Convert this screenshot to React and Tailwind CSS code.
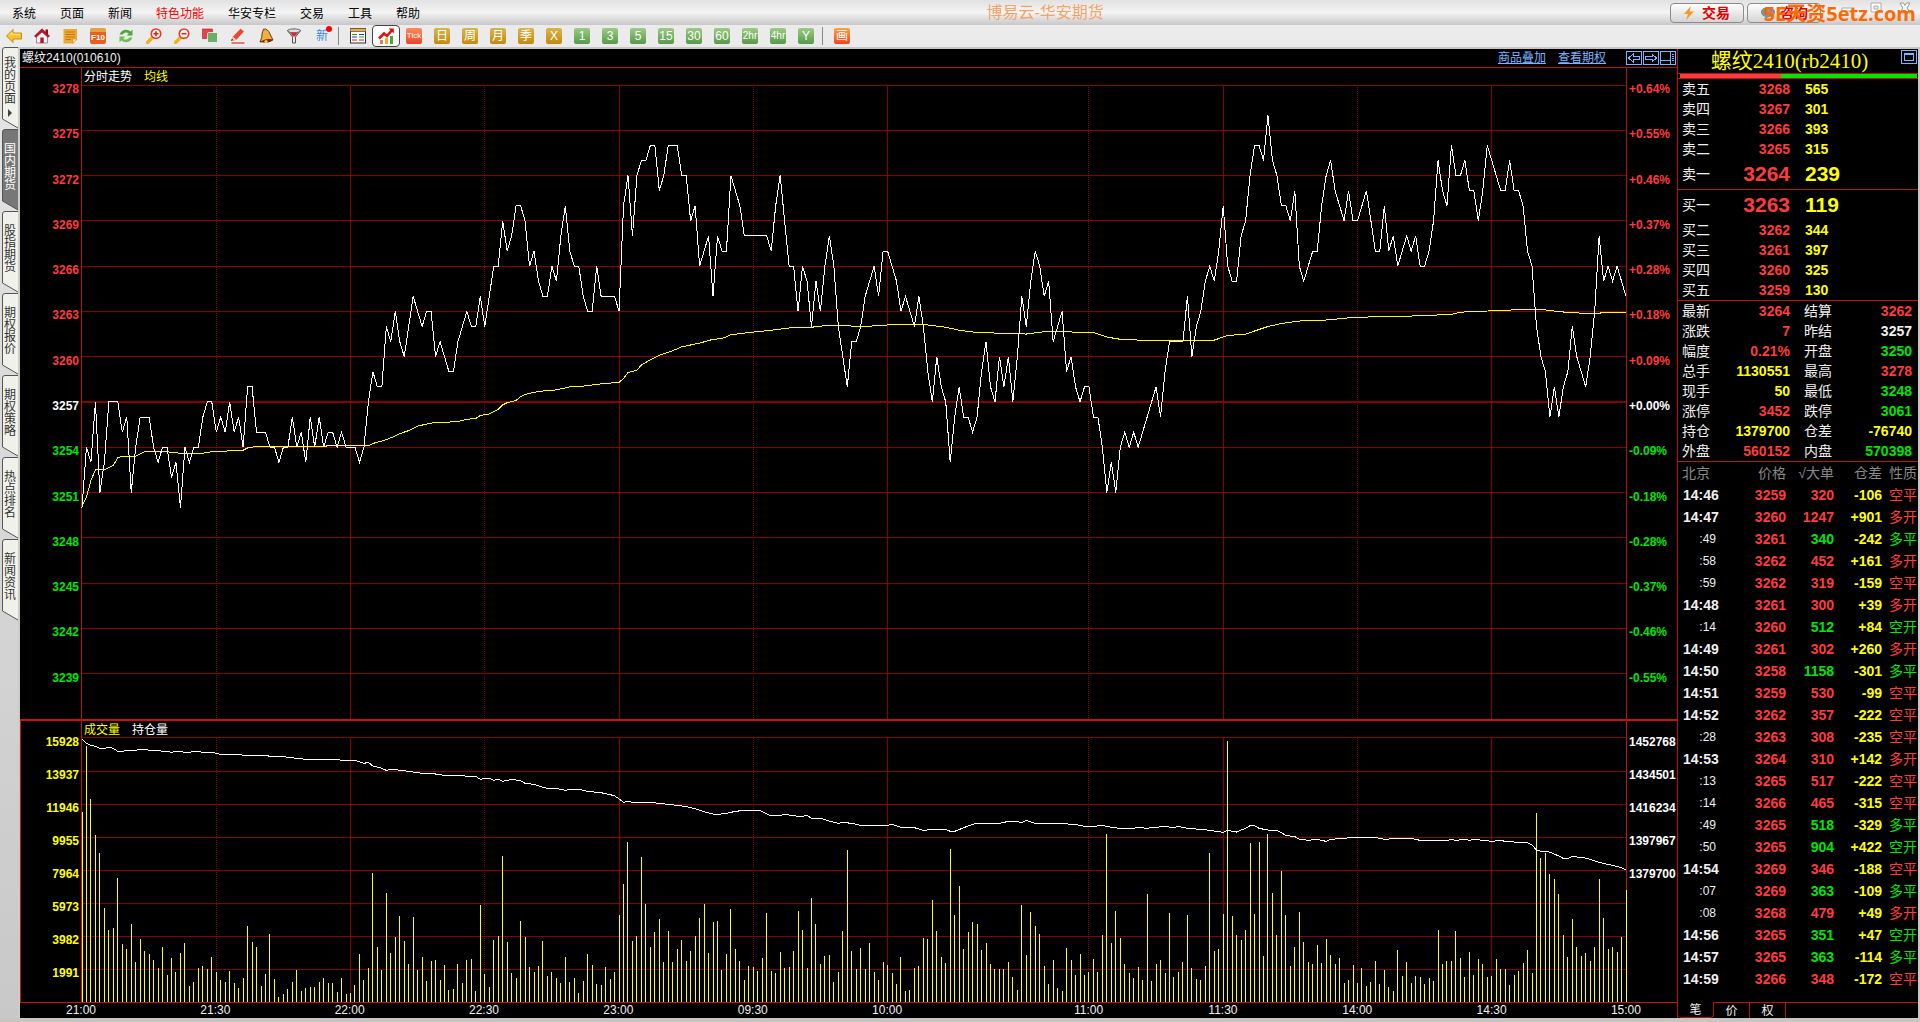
import React, { useState } from 'react';

// one value per trading minute, 21:00 -> 15:00, counted from BASE
const BASE = 3250;
const TOP_PRICE = 3278;
const MINUTES = 345;
const prices = [
  0, 4, 3, 7, 1, 3, 7, 7, 7, 5, 6, 1, 4, 6, 6, 6, 4, 3, 4, 4,
  2, 3, 0, 4, 3, 4, 4, 6, 7, 7, 5, 6, 5, 7, 5, 6, 4, 8, 8, 5,
  5, 5, 4, 4, 3, 4, 4, 6, 4, 5, 3, 6, 4, 6, 4, 5, 5, 4, 5, 4,
  4, 4, 3, 4, 7, 9, 8, 8, 12, 11, 13, 11, 10, 12, 14, 13, 12, 13, 13, 10,
  11, 10, 9, 9, 11, 12, 13, 12, 12, 14, 12, 14, 16, 16, 19, 17, 18, 20, 20, 19,
  16, 17, 15, 14, 14, 16, 15, 18, 20, 17, 16, 16, 14, 13, 13, 16, 14, 14, 14, 14,
  13, 20, 22, 18, 22, 23, 23, 24, 24, 21, 22, 24, 24, 24, 22, 22, 19, 20, 16, 17,
  18, 14, 18, 17, 17, 22, 21, 20, 18, 18, 18, 18, 18, 18, 17, 20, 22, 19, 16, 16,
  13, 16, 15, 12, 15, 13, 16, 18, 16, 12, 10, 8, 11, 11, 12, 14, 15, 16, 14, 17,
  17, 16, 15, 13, 14, 13, 12, 14, 12, 9, 7, 10, 8, 7, 3, 6, 8, 6, 6, 5,
  6, 9, 11, 8, 7, 10, 8, 10, 7, 10, 14, 12, 15, 17, 16, 14, 15, 11, 12, 13,
  9, 10, 8, 7, 8, 8, 6, 6, 4, 1, 3, 1, 4, 5, 4, 5, 4, 5, 6, 7,
  8, 6, 9, 11, 11, 11, 11, 14, 10, 12, 13, 15, 16, 15, 17, 20, 16, 15, 15, 18,
  19, 22, 24, 24, 23, 26, 23, 22, 20, 20, 19, 21, 16, 15, 16, 17, 17, 20, 22, 23,
  21, 20, 19, 21, 19, 19, 20, 21, 19, 17, 17, 20, 17, 18, 16, 17, 18, 17, 18, 16,
  16, 17, 19, 23, 21, 20, 24, 22, 22, 23, 21, 21, 19, 21, 24, 23, 22, 21, 21, 23,
  21, 21, 20, 17, 16, 12, 10, 9, 6, 8, 6, 8, 9, 12, 10, 9, 8, 10, 13, 18,
  15, 16, 15, 16, 15, 14,
];

// [minute, average above BASE]
const average = [
  [0, 0.1], [1, 0.7], [2, 1.8], [3, 2.5], [5, 2.5], [7, 2.8], [8, 3.3], [9, 3.4], [12, 3.4], [14, 3.7],
  [19, 3.7], [22, 3.6], [27, 3.6], [29, 3.7], [36, 3.8], [37, 3.95], [39, 4.05], [64, 4.1], [65, 4.25],
  [68, 4.5], [70, 4.75], [71, 4.9], [73, 5.1], [75, 5.4], [78, 5.6], [84, 5.7], [86, 5.85], [88, 5.9],
  [89, 6.1], [91, 6.2], [93, 6.5], [94, 6.8], [95, 6.95], [97, 7.1], [98, 7.35], [99, 7.5], [102, 7.7],
  [106, 7.8], [109, 8], [112, 8.05], [116, 8.2], [120, 8.3], [121, 8.55], [122, 8.95], [124, 9.1],
  [125, 9.45], [127, 9.8], [129, 10.1], [132, 10.4], [134, 10.65], [138, 10.9], [141, 11.15], [143, 11.2],
  [145, 11.45], [149, 11.6], [154, 11.75], [158, 11.9], [163, 11.95], [166, 12.05], [170, 12.05],
  [175, 12], [180, 12.1], [189, 12.1], [193, 11.95], [196, 11.75], [200, 11.6], [206, 11.55], [211, 11.5],
  [215, 11.65], [219, 11.65], [226, 11.6], [229, 11.3], [232, 11.15], [236, 11.1], [245, 11.05],
  [251, 11.05], [253, 11.1], [256, 11.4], [260, 11.5], [263, 11.8], [265, 12], [268, 12.2], [273, 12.4],
  [277, 12.4], [284, 12.6], [290, 12.65], [298, 12.7], [306, 12.8], [308, 12.95], [316, 13.05],
  [324, 13.15], [327, 13.1], [330, 12.98], [334, 12.9], [338, 12.85], [341, 12.95], [345, 12.95],
];

// top edge of each volume bar, the bars stand on VOL_BASE
const VOL_TOP = 24;
const VOL_BASE = 816;
const volumeTops = [
  246, 48, 207, 315, 369, 534, 600, 594, 444, 642, 657, 582, 696, 627, 663, 672, 690, 714, 651, 735,
  684, 726, 669, 639, 768, 756, 714, 708, 717, 681, 726, 750, 756, 723, 759, 774, 744, 588, 636, 651,
  768, 732, 612, 747, 801, 792, 777, 756, 720, 783, 774, 771, 771, 756, 744, 759, 759, 786, 744, 792,
  789, 765, 672, 750, 714, 429, 651, 720, 489, 669, 621, 558, 633, 702, 561, 720, 681, 753, 693, 690,
  750, 705, 780, 777, 702, 759, 690, 687, 783, 525, 732, 771, 630, 618, 378, 636, 729, 744, 573, 621,
  711, 726, 708, 633, 738, 726, 744, 759, 681, 756, 744, 789, 753, 672, 705, 762, 765, 711, 747, 726,
  555, 462, 336, 633, 618, 381, 522, 651, 606, 567, 696, 603, 696, 657, 630, 693, 663, 618, 564, 522,
  669, 576, 573, 720, 672, 537, 657, 693, 750, 708, 711, 723, 684, 549, 723, 729, 666, 714, 711, 663,
  543, 600, 714, 504, 582, 702, 678, 675, 756, 726, 603, 360, 663, 717, 654, 717, 639, 726, 750, 696,
  705, 729, 762, 681, 783, 780, 714, 708, 624, 627, 510, 603, 681, 699, 357, 555, 468, 657, 606, 576,
  582, 660, 639, 702, 717, 717, 717, 696, 741, 780, 525, 675, 546, 588, 612, 708, 762, 690, 774, 783,
  654, 690, 735, 672, 735, 726, 687, 726, 615, 312, 639, 543, 624, 702, 729, 744, 711, 750, 492, 753,
  702, 690, 729, 549, 741, 726, 696, 555, 714, 747, 750, 708, 369, 663, 657, 552, 33, 558, 615, 630,
  600, 339, 552, 336, 678, 312, 489, 615, 423, 555, 708, 651, 546, 636, 696, 702, 645, 699, 627, 675,
  702, 684, 759, 750, 705, 759, 714, 768, 756, 693, 762, 720, 771, 783, 660, 738, 696, 759, 738, 741,
  762, 744, 753, 600, 702, 693, 693, 603, 684, 741, 666, 735, 687, 702, 741, 738, 687, 717, 717, 765,
  735, 723, 699, 660, 729, 249, 384, 369, 432, 447, 492, 615, 681, 567, 651, 678, 669, 693, 651, 447,
  564, 657, 651, 666, 621, 480,
];

const openInterest = [
  [0, 28], [1, 40], [2, 46], [3, 49], [4, 55], [5, 55], [6, 52], [7, 55], [8, 64], [9, 64], [10, 61],
  [12, 61], [13, 58], [14, 58], [15, 61], [17, 61], [18, 64], [19, 64], [20, 67], [21, 64], [22, 64],
  [23, 67], [24, 67], [25, 64], [26, 64], [27, 67], [29, 67], [31, 73], [35, 73], [36, 76], [41, 76],
  [42, 79], [45, 79], [46, 82], [48, 85], [50, 88], [57, 88], [58, 91], [61, 91], [62, 95], [63, 100],
  [64, 97], [65, 108], [67, 115], [68, 121], [69, 118], [70, 118], [71, 121], [73, 124], [76, 130],
  [78, 130], [81, 136], [85, 136], [86, 139], [88, 139], [89, 148], [90, 145], [91, 145], [92, 151],
  [93, 148], [94, 154], [96, 148], [98, 152], [99, 160], [101, 163], [103, 172], [104, 175], [106, 175],
  [108, 181], [109, 178], [111, 178], [113, 184], [116, 188], [119, 197], [120, 207], [121, 217],
  [122, 214], [123, 217], [127, 217], [131, 223], [133, 226], [135, 230], [137, 236], [139, 245],
  [141, 252], [142, 253], [144, 250], [146, 244], [148, 241], [151, 241], [152, 244], [153, 252],
  [154, 257], [156, 256], [157, 253], [160, 259], [161, 259], [162, 256], [163, 265], [165, 265],
  [167, 273], [169, 280], [170, 277], [172, 280], [174, 286], [180, 286], [181, 283], [183, 292],
  [186, 293], [188, 301], [190, 298], [193, 298], [194, 304], [195, 304], [197, 293], [199, 283],
  [200, 280], [205, 280], [207, 274], [209, 275], [210, 277], [211, 271], [213, 280], [219, 281],
  [222, 283], [224, 289], [226, 289], [228, 286], [230, 292], [232, 295], [235, 295], [236, 292],
  [238, 295], [239, 292], [242, 290], [244, 292], [245, 289], [247, 295], [250, 298], [252, 301],
  [255, 307], [256, 301], [258, 306], [259, 300], [260, 295], [261, 287], [262, 287], [263, 295],
  [265, 300], [267, 301], [269, 316], [271, 320], [272, 327], [274, 331], [276, 328], [278, 334],
  [279, 328], [282, 325], [284, 322], [289, 322], [291, 328], [294, 325], [297, 325], [299, 331],
  [305, 331], [306, 328], [307, 331], [309, 328], [310, 331], [311, 328], [315, 334], [317, 331],
  [318, 334], [321, 337], [323, 338], [324, 345], [325, 360], [326, 364], [328, 366], [330, 378],
  [331, 385], [332, 385], [333, 379], [336, 384], [339, 397], [342, 406], [344, 413], [345, 420],
];

const timeTicks = [
  { at: 0, label: '21:00' },
  { at: 30, label: '21:30', dotted: true },
  { at: 60, label: '22:00' },
  { at: 90, label: '22:30', dotted: true },
  { at: 120, label: '23:00' },
  { at: 150, label: '09:30', dotted: true },
  { at: 180, label: '10:00' },
  { at: 225, label: '11:00', dotted: true },
  { at: 255, label: '11:30' },
  { at: 285, label: '14:00', dotted: true },
  { at: 315, label: '14:30' },
  { at: 345, label: '15:00' },
];

const priceLabels = [3278, 3275, 3272, 3269, 3266, 3263, 3260, 3257, 3254, 3251, 3248, 3245, 3242, 3239];
const percentLabels = [
  '+0.64%', '+0.55%', '+0.46%', '+0.37%', '+0.28%', '+0.18%', '+0.09%',
  '+0.00%', '-0.09%', '-0.18%', '-0.28%', '-0.37%', '-0.46%', '-0.55%',
];
const volumeLabels = ['15928', '13937', '11946', '9955', '7964', '5973', '3982', '1991'];
const interestLabels = ['1452768', '1434501', '1416234', '1397967', '1379700', '', '', ''];

const R = 'text-[#ff3c3c]';
const G = 'text-[#00e600]';
const Y = 'text-[#ffff00]';
const W = 'text-[#f0f0f0]';

const asks = [
  ['卖五', 3268, 565],
  ['卖四', 3267, 301],
  ['卖三', 3266, 393],
  ['卖二', 3265, 315],
  ['卖一', 3264, 239],
];
const bids = [
  ['买一', 3263, 119],
  ['买二', 3262, 344],
  ['买三', 3261, 397],
  ['买四', 3260, 325],
  ['买五', 3259, 130],
];

const stats = [
  ['最新', '3264', R, '结算', '3262', R],
  ['涨跌', '7', R, '昨结', '3257', W],
  ['幅度', '0.21%', R, '开盘', '3250', G],
  ['总手', '1130551', Y, '最高', '3278', R],
  ['现手', '50', Y, '最低', '3248', G],
  ['涨停', '3452', R, '跌停', '3061', G],
  ['持仓', '1379700', Y, '仓差', '-76740', Y],
  ['外盘', '560152', R, '内盘', '570398', G],
];

// time, price, volume, open interest change, kind, colour
const ticks = [
  ['14:46', 3259, 320, '-106', '空平', R],
  ['14:47', 3260, 1247, '+901', '多开', R],
  [':49', 3261, 340, '-242', '多平', G],
  [':58', 3262, 452, '+161', '多开', R],
  [':59', 3262, 319, '-159', '空平', R],
  ['14:48', 3261, 300, '+39', '多开', R],
  [':14', 3260, 512, '+84', '空开', G],
  ['14:49', 3261, 302, '+260', '多开', R],
  ['14:50', 3258, 1158, '-301', '多平', G],
  ['14:51', 3259, 530, '-99', '空平', R],
  ['14:52', 3262, 357, '-222', '空平', R],
  [':28', 3263, 308, '-235', '空平', R],
  ['14:53', 3264, 310, '+142', '多开', R],
  [':13', 3265, 517, '-222', '空平', R],
  [':14', 3266, 465, '-315', '空平', R],
  [':49', 3265, 518, '-329', '多平', G],
  [':50', 3265, 904, '+422', '空开', G],
  ['14:54', 3269, 346, '-188', '空平', R],
  [':07', 3269, 363, '-109', '多平', G],
  [':08', 3268, 479, '+49', '多开', R],
  ['14:56', 3265, 351, '+47', '空开', G],
  ['14:57', 3265, 363, '-114', '多平', G],
  ['14:59', 3266, 348, '-172', '空平', R],
];

const menus = ['系统', '页面', '新闻', '特色功能', '华安专栏', '交易', '工具', '帮助'];
const sideTabs = ['我的页面', '国内期货', '股指期货', '期权报价', '期权策略', '热点排名', '新闻资讯'];

const goldBtn = 'bg-linear-to-b from-[#d9b44a] to-[#c48a00] text-white';
const greenBtn = 'bg-linear-to-b from-[#9ccc84] to-[#559a48] text-white';
const periods = [
  { label: 'Tick', cls: 'bg-linear-to-b from-[#ff8a5c] to-[#e8432a] text-white text-[8px]' },
  { label: '日', cls: `${goldBtn} text-xs` },
  { label: '周', cls: `${goldBtn} text-xs` },
  { label: '月', cls: `${goldBtn} text-xs` },
  { label: '季', cls: `${goldBtn} text-xs` },
  { label: 'X', cls: `${goldBtn} text-xs` },
  { label: '1', cls: `${greenBtn} text-xs` },
  { label: '3', cls: `${greenBtn} text-xs` },
  { label: '5', cls: `${greenBtn} text-xs` },
  { label: '15', cls: `${greenBtn} text-xs` },
  { label: '30', cls: `${greenBtn} text-xs` },
  { label: '60', cls: `${greenBtn} text-xs` },
  { label: '2hr', cls: `${greenBtn} text-[10px]` },
  { label: '4hr', cls: `${greenBtn} text-[10px]` },
  { label: 'Y', cls: `${greenBtn} text-xs` },
];

const Svg = ({ children }) => (
  <svg viewBox="0 0 16 16" className="h-4 w-4" aria-hidden="true">{children}</svg>
);

const tools = [
  {
    name: '后退',
    icon: (
      <Svg>
        <path d="M0.5 8 L7 1.5 V5 H15.5 V11 H7 V14.5 Z" fill="#fbc32a" stroke="#d08a10" strokeWidth="1" />
        <path d="M3 7.5 L6 4.5 V6.3 H14" fill="none" stroke="#ffe88a" />
      </Svg>
    ),
  },
  {
    name: '首页',
    icon: (
      <Svg>
        <path d="M2.5 8 V15 H13.5 V8 L8 3 Z" fill="#f2f2f2" stroke="#777" strokeWidth="0.8" />
        <path d="M11.5 1.5 H14 V6 H11.5 Z" fill="#8a1020" />
        <path d="M0.5 8 L8 0.8 L15.5 8 L14 9.3 L8 4 L2 9.3 Z" fill="#c8102a" stroke="#7a0818" strokeWidth="0.6" />
        <path d="M6.3 9.5 H9.7 V15 H6.3 Z" fill="#b8102a" />
      </Svg>
    ),
  },
  {
    name: '公告',
    icon: (
      <Svg>
        <path d="M1.5 1 H15 V11 L11 15.5 H1.5 Z" fill="#eda932" />
        <path d="M15 11 L11 15.5 V11 Z" fill="#fff0c0" stroke="#c88820" strokeWidth="0.6" />
        <path d="M3.5 4 H13 M3.5 6.5 H13 M3.5 9 H13 M3.5 11.5 H9" stroke="#bd7a12" strokeWidth="1" />
      </Svg>
    ),
  },
  {
    name: 'F10资料',
    icon: (
      <span className="flex h-4 w-4 items-center justify-center rounded-xs border-t-4 border-[#e8a040] bg-[#e86020] text-[8px] font-bold leading-none text-white">
        F10
      </span>
    ),
  },
  {
    name: '刷新',
    icon: (
      <Svg>
        <path d="M1.5 6.5 Q3.5 1.8 8 1.8 Q11 1.8 12.5 3.4 L14.5 1.8 V7.5 H8.8 L10.8 5.3 Q9.5 4.4 8 4.4 Q5.8 4.4 4.6 6.5 Z" fill="#4ea83c" />
        <path d="M14.5 9.5 Q12.5 14.2 8 14.2 Q5 14.2 3.5 12.6 L1.5 14.2 V8.5 H7.2 L5.2 10.7 Q6.5 11.6 8 11.6 Q10.2 11.6 11.4 9.5 Z" fill="#6cc04e" />
      </Svg>
    ),
  },
  {
    name: '放大',
    icon: (
      <Svg>
        <path d="M1.5 14.5 L6.5 9.5" stroke="#f0b020" strokeWidth="3.4" strokeLinecap="round" />
        <circle cx="10" cy="5.7" r="4.7" fill="#fff" stroke="#ee3a22" strokeWidth="1.7" />
        <path d="M7.5 5.7 H12.5 M10 3.2 V8.2" stroke="#e02010" strokeWidth="1.6" />
      </Svg>
    ),
  },
  {
    name: '缩小',
    icon: (
      <Svg>
        <path d="M1.5 14.5 L6.5 9.5" stroke="#f0b020" strokeWidth="3.4" strokeLinecap="round" />
        <circle cx="10" cy="5.7" r="4.7" fill="#fff" stroke="#ee3a22" strokeWidth="1.7" />
        <path d="M7.5 5.7 H12.5" stroke="#e02010" strokeWidth="1.6" />
      </Svg>
    ),
  },
  {
    name: '叠加',
    icon: (
      <Svg>
        <rect x="0.5" y="1" width="10" height="9.5" fill="#e8404a" stroke="#b02028" strokeWidth="0.6" />
        <rect x="5.5" y="4.5" width="10" height="10" rx="1" fill="#68b068" stroke="#fff" strokeWidth="0.7" />
      </Svg>
    ),
  },
  {
    name: '画线',
    icon: (
      <Svg>
        <path d="M1 13 L3 8.5 L10.5 0.8 L14 3.6 L6.3 11.8 Z" fill="#ee4430" />
        <path d="M1 13 L3 8.5 L6.3 11.8 Z" fill="#f5cf9a" />
        <path d="M1 13 L2 10.8 L3.2 12 Z" fill="#222" />
        <path d="M1.5 15 H14.5" stroke="#e03020" strokeWidth="1.2" />
      </Svg>
    ),
  },
  {
    name: '预警',
    icon: (
      <Svg>
        <path d="M5.5 1 Q10 0.5 12 6 L15 12 Q9 11.5 2 14 Q4 10 4.2 5 Z" fill="#f0b040" stroke="#6a2a08" strokeWidth="0.9" />
        <path d="M2 14 Q9 9 15 12 Q11 16 2 14 Z" fill="#7a2810" />
        <circle cx="8" cy="13.5" r="1.6" fill="#ffcc40" />
      </Svg>
    ),
  },
  {
    name: '过滤',
    icon: (
      <Svg>
        <path d="M1.5 2.5 L6.5 9 V15 H9.5 V9 L14.5 2.5 Z" fill="#e8e8e8" stroke="#555" strokeWidth="1" />
        <ellipse cx="8" cy="2.8" rx="6.5" ry="1.9" fill="#ddd" stroke="#555" strokeWidth="0.9" />
        <path d="M4 4.8 H12 L8.8 8.5 H7.2 Z" fill="#e82030" />
      </Svg>
    ),
  },
  {
    name: '新功能',
    icon: (
      <span className="relative text-xs leading-4 text-[#3c8ce6]">
        新
        <span className="absolute -right-1 -top-0.5 h-1.5 w-1.5 rounded-full bg-[#ff0000]" />
      </span>
    ),
  },
];

const pricePath = prices.map((p, i) => `${i},${TOP_PRICE - BASE - p}`).join(' ');
const averagePath = average.map(([i, p]) => `${i},${TOP_PRICE - BASE - p}`).join(' ');
const interestPath = openInterest.map(([i, y]) => `${i},${y}`).join(' ');
const volumePath = volumeTops.map((y, i) => `M${i} ${y}V${VOL_BASE}`).join('');

const Line = (props) => <line vectorEffect="non-scaling-stroke" stroke="#870000" {...props} />;

const VerticalGrid = ({ y1, y2 }) =>
  timeTicks.slice(1, -1).map((t) => (
    <Line key={t.at} x1={t.at} x2={t.at} y1={y1} y2={y2} strokeDasharray={t.dotted ? '1 1' : undefined} />
  ));

const PriceChart = () => (
  <svg
    viewBox="0 0 345 42"
    preserveAspectRatio="none"
    shapeRendering="crispEdges"
    className="block h-full min-h-0 w-full overflow-visible"
    role="img"
    aria-label="分时走势"
  >
    {priceLabels.map((p) => (
      <Line key={p} x1="0" x2={MINUTES} y1={TOP_PRICE - p} y2={TOP_PRICE - p} strokeWidth={p === 3257 ? 2 : 1} />
    ))}
    <VerticalGrid y1={0} y2={42} />
    <polyline points={averagePath} fill="none" stroke="#ffff00" vectorEffect="non-scaling-stroke" />
    <polyline points={pricePath} fill="none" stroke="#ffffff" vectorEffect="non-scaling-stroke" />
  </svg>
);

const VolumeChart = () => (
  <svg
    viewBox="0 24 345 792"
    preserveAspectRatio="none"
    shapeRendering="crispEdges"
    className="block h-full min-h-0 w-full overflow-visible"
    role="img"
    aria-label="成交量"
  >
    {volumeLabels.map((v, i) => (
      <Line key={v} x1="0" x2={MINUTES} y1={VOL_TOP + i * 99} y2={VOL_TOP + i * 99} />
    ))}
    <VerticalGrid y1={VOL_TOP} y2={VOL_BASE} />
    <path d={volumePath} fill="none" stroke="#ffff00" vectorEffect="non-scaling-stroke" />
    <polyline points={interestPath} fill="none" stroke="#ffffff" vectorEffect="non-scaling-stroke" />
  </svg>
);

const Axis = ({ labels, className, colorOf }) => (
  <div className={`-mt-1 mb-1 flex min-h-0 flex-col text-xs font-bold leading-4 ${className}`}>
    {labels.map((label, i) => (
      <div key={i} className={`min-h-0 flex-1 ${colorOf(i)}`}>{label}</div>
    ))}
  </div>
);

const priceColor = (i) => (i < 7 ? R : i === 7 ? 'text-white' : G);

const QuoteRow = ({ row, big }) => (
  <tr className={big ? 'h-[30px]' : 'h-5'}>
    <th scope="row" className={`w-[60px] pl-1 text-left font-normal ${W}`}>{row[0]}</th>
    <td className={`w-[52px] text-right font-bold ${R} ${big ? 'text-[21px]' : ''}`}>{row[1]}</td>
    <td className={`pl-[15px] font-bold ${Y} ${big ? 'text-[21px]' : ''}`}>{row[2]}</td>
  </tr>
);

const SideTab = ({ label, active, arrow, onClick }) => (
  <button
    type="button"
    onClick={onClick}
    className={`relative flex h-[82px] w-[18px] flex-col items-center pl-0.5 text-xs leading-3 ${
      arrow ? 'pt-2.5' : 'pt-3.5'
    } ${active ? 'text-white' : 'text-[#333]'}`}
  >
    <svg viewBox="0 0 18 82" className="absolute inset-0 h-full w-full" aria-hidden="true">
      <path
        d="M18 0.5 H5 Q2.5 0.5 2.5 3 V72 L18 81"
        fill={active ? '#777777' : '#f1f1ec'}
        stroke="#555555"
        strokeWidth="1"
      />
    </svg>
    {label.split('').map((ch, i) => (
      <span key={i} className="relative">{ch}</span>
    ))}
    {arrow && (
      <svg viewBox="0 0 6 8" className="relative mt-1 h-2 w-1.5" aria-hidden="true">
        <path d="M1 0 L5 4 L1 8 Z" fill="#444" />
      </svg>
    )}
  </button>
);

const BoxIcon = ({ name, children }) => (
  <button type="button" aria-label={name} className="h-4 w-[17px]">
    <svg viewBox="0 0 17 16" className="h-4 w-[17px]" fill="none" stroke="#7db4ff" shapeRendering="crispEdges">
      <rect x="0.5" y="1.5" width="15" height="13" />
      {children}
    </svg>
  </button>
);

const App = () => {
  const [tab, setTab] = useState(1);
  const [detail, setDetail] = useState('笔');

  return (
    <div className="flex h-screen min-h-[700px] flex-col overflow-hidden bg-[#c9c5c2] font-['Liberation_Sans','Noto_Sans_CJK_SC',sans-serif] text-xs text-black">
      {/* Menu bar */}
      <header className="flex h-[25px] shrink-0 items-center bg-linear-to-b from-[#e2e2e2] via-[#f4f4f4] to-[#c8c8c8]">
        <nav className="flex gap-6 pl-3 pt-0.5 leading-5">
          {menus.map((m) => (
            <button key={m} type="button" className={m === '特色功能' ? 'text-[#ff0000]' : ''}>{m}</button>
          ))}
        </nav>
        <h1 className="flex-1 text-center text-base leading-5 text-[#f4a468]">博易云-华安期货</h1>
        <div className="relative flex h-full w-[250px] items-center gap-[3px]">
          <button
            type="button"
            className="flex h-5 w-[74px] items-center justify-center gap-2 rounded-sm border border-[#8c8c8c] bg-linear-to-b from-white to-[#d4d4d4] text-sm font-bold leading-4 text-[#e00000]"
          >
            <svg viewBox="0 0 10 14" className="h-3.5 w-2.5" aria-hidden="true">
              <path d="M7 0 L0 8 H4 L2 14 L10 5.5 H5.5 Z" fill="#f59a1c" />
            </svg>
            交易
          </button>
          <button
            type="button"
            className="flex h-5 w-[74px] items-center justify-center gap-1 rounded-sm border border-[#8c8c8c] bg-linear-to-b from-white to-[#d4d4d4] text-sm font-bold leading-4 text-[#e00000]"
          >
            <svg viewBox="0 0 18 14" className="h-3.5 w-4" aria-hidden="true">
              <path d="M9 0.5 C4 0.5 1 3 1 6 C1 9 3.5 11 6 11.5 L5 14 L9.5 11.7 C14 11.5 17 9 17 6 C17 3 14 0.5 9 0.5 Z" fill="#8c8c8c" />
            </svg>
            咨询
          </button>
          <div className="flex h-full flex-1 items-start justify-around pl-2 pt-0.5">
            <button type="button" aria-label="最小化">
              <svg viewBox="0 0 12 12" className="h-3 w-3"><path d="M1 6 H11 V9 H1 Z" fill="#fff" stroke="#aaa" /></svg>
            </button>
            <button type="button" aria-label="还原">
              <svg viewBox="0 0 12 12" className="h-3 w-3">
                <path d="M1 1 H11 V10 H1 Z M4 4 H8 V7 H4 Z" fill="#fff" fillRule="evenodd" stroke="#aaa" />
              </svg>
            </button>
            <button type="button" aria-label="关闭">
              <svg viewBox="0 0 12 12" className="h-3 w-3">
                <path d="M1 1 H4.5 L6 3.5 L7.5 1 H11 L8 6 L11 11 H7.5 L6 8.5 L4.5 11 H1 L4 6 Z" fill="#fff" stroke="#999" />
              </svg>
            </button>
          </div>
          <span className="pointer-events-none absolute right-1 top-0.5 font-['Open_Sans','Noto_Sans_CJK_SC',sans-serif] text-xl font-bold leading-6 text-[#ff6a00]">
            5E天资5etz.com
          </span>
        </div>
      </header>

      {/* Toolbar */}
      <div className="flex h-6 shrink-0 items-center border-b-2 border-[#c9c5c5] bg-[#ebebeb]">
        {tools.map((t) => (
          <button key={t.name} type="button" aria-label={t.name} className="flex h-full w-7 items-center justify-center">
            {t.icon}
          </button>
        ))}
        <span className="ml-0.5 mr-[5px] h-[18px] w-px bg-[#888]" />
        <button type="button" aria-label="报价列表" className="flex h-full w-7 items-center justify-center">
          <Svg>
            <rect x="0.5" y="1" width="15" height="14" fill="#fff" stroke="#333" />
            <rect x="0" y="0.5" width="16" height="3" fill="#e8b040" stroke="#333" strokeWidth="0.6" />
            <path d="M2 6.5 H7 M9 9 H14" stroke="#20a020" />
            <path d="M2 9 H7 M9 6.5 H14" stroke="#2040c0" />
            <path d="M2 12 H7 M9 12 H14" stroke="#d02020" />
          </Svg>
        </button>
        <button
          type="button"
          aria-label="分时图"
          className="flex h-full w-7 items-center justify-center rounded-sm border border-[#444] bg-white"
        >
          <Svg>
            <path d="M2 12 H5 V16 H2 Z" fill="#d08850" />
            <path d="M7 10 H10 V16 H7 Z" fill="#e0b030" />
            <path d="M12 8 H15 V16 H12 Z" fill="#48a838" />
            <path d="M1 10.5 L6 5.5 L9 8 L14.5 1.5" fill="none" stroke="#e01010" strokeWidth="2.6" />
            <path d="M10.5 0.5 H15.8 V5.5 Z" fill="#e01010" />
          </Svg>
        </button>
        {periods.map((p) => (
          <button key={p.label} type="button" className="flex h-full w-7 items-center justify-center">
            <span className={`flex h-4 w-4 items-center justify-center rounded-xs leading-none ${p.cls}`}>{p.label}</span>
          </button>
        ))}
        <span className="ml-0.5 mr-[5px] h-[18px] w-px bg-[#888]" />
        <button type="button" className="flex h-full w-7 items-center justify-center">
          <span className="flex h-4 w-4 items-center justify-center rounded-xs bg-linear-to-b from-[#ffa040] to-[#f04020] text-xs leading-none text-white">
            画
          </span>
        </button>
      </div>

      <div className="flex min-h-0 flex-1 pb-1 pr-0.5">
        {/* Page tabs */}
        <aside className="-mt-0.5 flex w-5 shrink-0 flex-col border-r-2 border-[#cfcac8] bg-linear-to-b from-[#e6e6e6] to-[#c8c8c8]">
          {sideTabs.map((t, i) => (
            <SideTab key={t} label={t} active={tab === i} arrow={i === 0} onClick={() => setTab(i)} />
          ))}
        </aside>

        {/* Chart */}
        <main className="flex min-w-0 flex-1 flex-col bg-black">
          <div className="flex h-[19px] shrink-0 items-center border-b border-[#b8140c] pl-0.5">
            <h2 className={`flex-1 leading-4 ${W}`}>螺纹2410(010610)</h2>
            <div className="flex items-center gap-3 leading-4 text-[#7db4ff]">
              <a href="#overlay" className="underline">商品叠加</a>
              <a href="#options" className="underline">查看期权</a>
            </div>
            <div className="ml-5 flex">
              <BoxIcon name="上一个">
                <path d="M2.5 8 L7 4 V6.5 H13.5 V9.5 H7 V12 Z" />
              </BoxIcon>
              <BoxIcon name="下一个">
                <path d="M13.5 8 L9 4 V6.5 H2.5 V9.5 H9 V12 Z" />
              </BoxIcon>
              <BoxIcon name="布局">
                <path d="M0.5 10.5 H10.5 M10.5 1.5 V14.5 M12 4.5 H14 M12 6.5 H14 M12 8.5 H14 M12 10.5 H14" />
              </BoxIcon>
            </div>
          </div>

          <section className="grid min-h-0 flex-[653] grid-cols-[61px_minmax(0,1fr)_50px] grid-rows-[17px_minmax(0,1fr)]">
            <div />
            <div className="flex gap-3 border-x border-[#b8140c] pl-0.5 leading-[18px]">
              <span className="text-white">分时走势</span>
              <span className={Y}>均线</span>
            </div>
            <div />
            <Axis labels={priceLabels} className="pr-0.5 text-right" colorOf={priceColor} />
            <div className="min-h-0 border-x border-[#b8140c]">
              <PriceChart />
            </div>
            <Axis labels={percentLabels} className="pl-0.5" colorOf={priceColor} />
          </section>

          <section className="grid min-h-0 flex-[282] grid-cols-[60px_minmax(0,1fr)_50px] grid-rows-[17px_minmax(0,1fr)] border-b border-l border-t-2 border-[#c4140c]">
            <div />
            <div className="flex gap-3 border-l border-r border-[#c4140c] pl-0.5 leading-[18px]">
              <span className={Y}>成交量</span>
              <span className="text-white">持仓量</span>
            </div>
            <div />
            <Axis labels={volumeLabels} className="pr-0.5 text-right" colorOf={() => Y} />
            <div className="min-h-0 border-l border-r border-[#c4140c]">
              <VolumeChart />
            </div>
            <Axis labels={interestLabels} className="pl-0.5" colorOf={() => 'text-white'} />
          </section>

          <div className={`flex h-[15px] shrink-0 pl-[61px] pr-[51px] leading-[15px] ${W}`}>
            {timeTicks.map((t, i) => (
              <span
                key={t.at}
                className="w-0 whitespace-nowrap"
                style={{ flexGrow: i < timeTicks.length - 1 ? timeTicks[i + 1].at - t.at : 0 }}
              >
                <span className="-ml-4 inline-block w-8 text-center">{t.label}</span>
              </span>
            ))}
          </div>
        </main>

        {/* Quote panel */}
        <aside className="flex w-[241px] shrink-0 flex-col border-l border-[#b8140c] bg-black text-sm leading-5">
          <div className="flex h-6 shrink-0 items-start">
            <h2 className={`flex-1 text-center font-['Liberation_Serif','Noto_Sans_CJK_SC',serif] text-[21px] leading-6 ${Y}`}>
              螺纹2410(rb2410)
            </h2>
            <BoxIcon name="窗口">
              <rect x="3.5" y="4.5" width="9" height="7" />
              <path d="M3.5 5.5 H12.5" />
            </BoxIcon>
          </div>
          <div className="flex h-1.5 shrink-0 border-y border-[#b8140c]">
            <div className="ml-0.5 w-[42%] bg-[#ff3c3c]" />
            <div className="mr-px flex-1 bg-[#00e600]" />
          </div>

          <table className="w-full shrink-0 border-b border-[#b8140c]">
            <tbody>
              {asks.map((row) => <QuoteRow key={row[0]} row={row} big={row[0] === '卖一'} />)}
            </tbody>
          </table>
          <table className="w-full shrink-0 border-b border-[#b8140c]">
            <tbody>
              {bids.map((row) => <QuoteRow key={row[0]} row={row} big={row[0] === '买一'} />)}
            </tbody>
          </table>

          <table className="w-full shrink-0 border-b border-[#b8140c]">
            <tbody>
              {stats.map(([a, av, ac, b, bv, bc]) => (
                <tr key={a} className="h-5">
                  <th scope="row" className={`w-10 pl-1 text-left font-normal ${W}`}>{a}</th>
                  <td className={`w-[72px] text-right font-bold ${ac}`}>{av}</td>
                  <th scope="row" className={`w-14 pl-3.5 text-left font-normal ${W}`}>{b}</th>
                  <td className={`pr-1.5 text-right font-bold ${bc}`}>{bv}</td>
                </tr>
              ))}
            </tbody>
          </table>

          <div className="min-h-0 flex-1 overflow-hidden">
            <table className="w-full table-fixed">
              <thead>
                <tr className="h-[22px] text-right text-[#888]">
                  <th className="w-[46px] pl-1 text-left font-normal">北京</th>
                  <th className="w-[62px] font-normal">价格</th>
                  <th className="w-12 whitespace-nowrap font-normal">√大单</th>
                  <th className="w-12 font-normal">仓差</th>
                  <th className="pr-px font-normal">性质</th>
                </tr>
              </thead>
              <tbody>
                {ticks.map(([time, price, vol, diff, kind, color], i) => (
                  <tr key={i} className="h-[22px] text-right font-bold">
                    {time.startsWith(':') ? (
                      <td className={`pr-2 text-xs font-normal ${W}`}>{time}</td>
                    ) : (
                      <td className={`pl-[5px] text-left ${W}`}>{time}</td>
                    )}
                    <td className={R}>{price}</td>
                    <td className={color}>{vol}</td>
                    <td className={Y}>{diff}</td>
                    <td className={`pr-px font-normal ${color}`}>{kind}</td>
                  </tr>
                ))}
              </tbody>
            </table>
          </div>

          <div className={`flex h-4 shrink-0 text-xs leading-4 ${W}`}>
            {['笔', '价', '权'].map((t) => (
              <button
                key={t}
                type="button"
                onClick={() => setDetail(t)}
                className={`w-9 border-r border-[#b8140c] ${
                  detail === t ? 'rounded-b-sm border-b' : 'border-t'
                }`}
              >
                {t}
              </button>
            ))}
            <div className="flex-1 border-t border-[#b8140c]" />
          </div>
        </aside>
      </div>
    </div>
  );
};

export default App;
